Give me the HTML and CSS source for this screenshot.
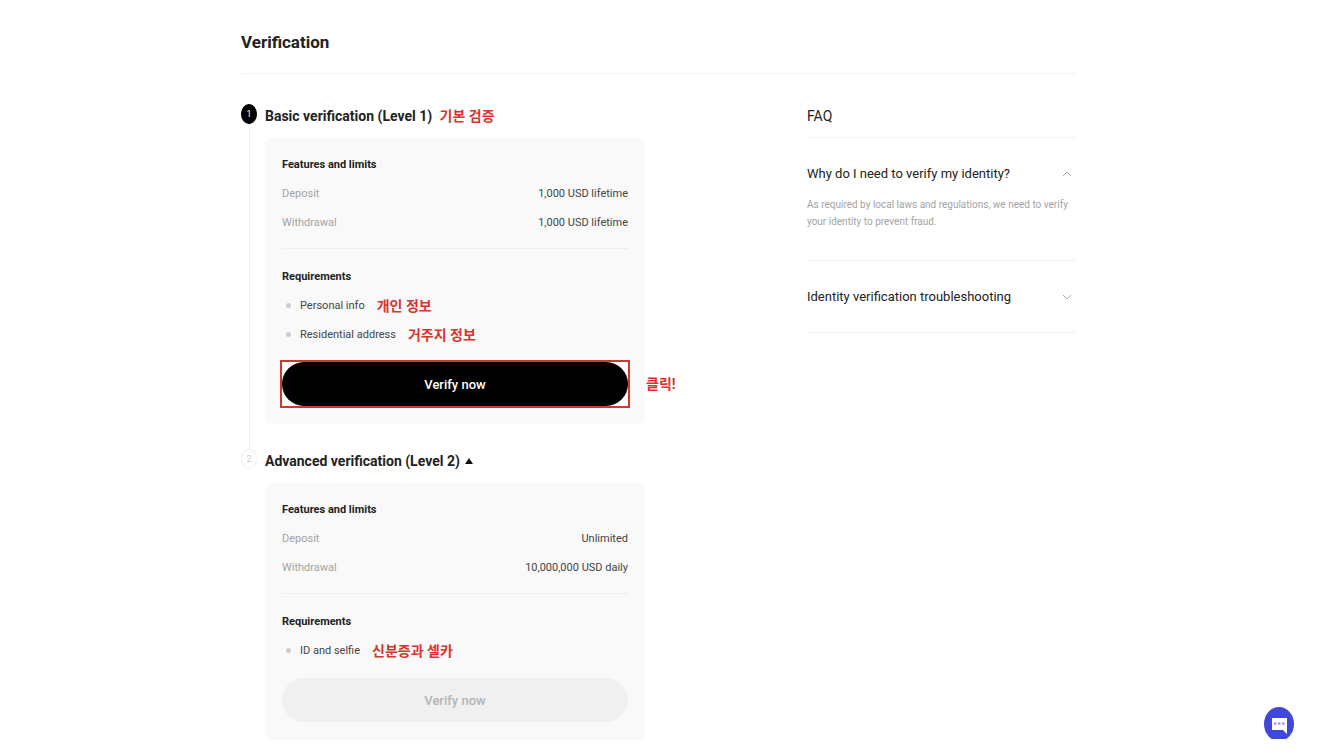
FILE: index.html
```
<!DOCTYPE html>
<html lang="en">
<head>
<meta charset="utf-8">
<meta name="viewport" content="width=device-width, initial-scale=1">
<title>Verification</title>
<link rel="stylesheet" href="styles.css">
</head>
<body>
<main class="page">
  <h1 class="page-title">Verification</h1>
  <div class="columns">
    <ol class="steps">
      <li class="step">
        <div class="rail"><span class="badge badge-active">1</span><span class="rail-line"></span></div>
        <section class="step-body">
          <h2 class="step-title">Basic verification (Level 1) <span class="note" lang="ko">기본 검증</span></h2>
          <div class="card">
            <h3 class="card-title">Features and limits</h3>
            <dl class="limits">
              <div class="limit"><dt>Deposit</dt><dd>1,000 USD lifetime</dd></div>
              <div class="limit"><dt>Withdrawal</dt><dd>1,000 USD lifetime</dd></div>
            </dl>
            <h3 class="card-title">Requirements</h3>
            <ul class="requirements">
              <li>Personal info <span class="note" lang="ko">개인 정보</span></li>
              <li>Residential address <span class="note" lang="ko">거주지 정보</span></li>
            </ul>
            <div class="action action-marked">
              <button class="verify" type="button">Verify now</button>
              <span class="note click-note" lang="ko">클릭!</span>
            </div>
          </div>
        </section>
      </li>
      <li class="step">
        <div class="rail"><span class="badge">2</span></div>
        <section class="step-body">
          <h2 class="step-title">Advanced verification (Level 2)
            <svg class="caret" viewBox="0 0 8 6" aria-hidden="true"><path d="M4 0 8 6H0Z"/></svg>
          </h2>
          <div class="card">
            <h3 class="card-title">Features and limits</h3>
            <dl class="limits">
              <div class="limit"><dt>Deposit</dt><dd>Unlimited</dd></div>
              <div class="limit"><dt>Withdrawal</dt><dd>10,000,000 USD daily</dd></div>
            </dl>
            <h3 class="card-title">Requirements</h3>
            <ul class="requirements">
              <li>ID and selfie <span class="note" lang="ko">신분증과 셀카</span></li>
            </ul>
            <div class="action">
              <button class="verify" type="button" disabled>Verify now</button>
            </div>
          </div>
        </section>
      </li>
    </ol>
    <aside class="faq">
      <h2 class="faq-title">FAQ</h2>
      <div class="faq-item faq-open">
        <button class="question" type="button" aria-expanded="true">Why do I need to verify my identity?
          <svg class="chevron" viewBox="0 0 10 6" aria-hidden="true"><path d="M1 5 5 1l4 4"/></svg>
        </button>
        <p class="answer">As required by local laws and regulations, we need to verify your identity to prevent fraud.</p>
      </div>
      <div class="faq-item">
        <button class="question" type="button" aria-expanded="false">Identity verification troubleshooting
          <svg class="chevron" viewBox="0 0 10 6" aria-hidden="true"><path d="M1 1l4 4 4-4"/></svg>
        </button>
      </div>
    </aside>
  </div>
</main>
<button class="chat" type="button" aria-label="Open chat">
  <svg class="chat-icon" viewBox="0 0 30 32" aria-hidden="true">
    <ellipse cx="15" cy="17" rx="15" ry="17" fill="#4048dc"/>
    <path d="M8 11h15v16l-4-4H8Z" fill="#fff"/>
    <path d="M10 16.500h2.500M14 16.500h2.500M18 16.500h2.500" stroke="#8b90e6" stroke-width="2"/>
  </svg>
</button>
</body>
</html>
```
FILE: styles.css
```
* { box-sizing: border-box; }
body {
  margin: 0;
  background: #fff;
  color: #222;
  font-family: Roboto, "Noto Sans CJK KR", sans-serif;
  font-size: 11px;
}
h1, h2, h3, p, ol, ul, dl, dd { margin: 0; padding: 0; }
ol, ul { list-style: none; }
button { font-family: inherit; border: 0; padding: 0; cursor: pointer; }

.page {
  max-width: 868px;
  margin: 0 auto;
  padding: 26px 18px 16px 15px;
}
.page-title {
  padding-bottom: 15px;
  border-bottom: 1px solid #f3f3f3;
  font-size: 17px;
  line-height: 32px;
  font-weight: 700;
}
.columns {
  display: grid;
  grid-template-columns: minmax(0, 404px) minmax(0, 269px);
  justify-content: space-between;
  padding-top: 30px;
}

.step { display: flex; gap: 8px; }
.rail {
  display: flex;
  flex-direction: column;
  align-items: center;
  width: 16px;
}
.badge {
  width: 16px;
  height: 20px;
  border: 1px solid #f0f0f0;
  border-radius: 50%;
  color: #ccc;
  font-size: 9px;
  line-height: 18px;
  text-align: center;
}
.badge-active { background: #000; border-color: #000; color: #fff; }
.rail-line { flex: 1; width: 1px; background: #f0f0f0; }
.step-body { flex: 1; min-width: 0; }
.step:first-child .step-body { padding-bottom: 25px; }
.step-title {
  padding-bottom: 10px;
  font-size: 14px;
  line-height: 24px;
  font-weight: 700;
}
.caret { width: 8px; height: 6px; margin-left: 2px; vertical-align: 2px; fill: #111; }
.card {
  padding: 12px 17px 18px;
  border-radius: 8px;
  background: #f9f9f9;
}
.card-title { font-size: 11px; line-height: 29px; font-weight: 700; }
.limits {
  margin-bottom: 13px;
  padding-bottom: 11px;
  border-bottom: 1px solid #eee;
}
.limit { display: flex; justify-content: space-between; line-height: 29px; }
.limit dt { color: #a3a3a3; }
.limit dd { color: #444; }
.requirements li {
  display: flex;
  align-items: center;
  height: 29px;
  color: #444;
}
.requirements li::before {
  content: "";
  width: 5px;
  height: 5px;
  margin: 0 9px 0 4px;
  border-radius: 50%;
  background: #ccc;
}
.note {
  color: #d8332f;
  font-size: 14px;
  line-height: 20px;
  font-weight: 700;
}
.step-title .note { margin-left: 4px; }
.requirements .note { margin-left: 12px; }
.action { position: relative; margin-top: 13px; }
.action-marked { outline: 2px solid #cf3733; background: #fff; }
.verify {
  display: block;
  width: 100%;
  height: 44px;
  border-radius: 22px;
  background: #000;
  color: #fff;
  font-size: 13px;
  font-weight: 500;
}
.verify:disabled { background: #f0f0f0; color: #b5b5b5; cursor: default; }
.click-note {
  position: absolute;
  left: 100%;
  top: 12px;
  margin-left: 18px;
  white-space: nowrap;
}

.faq-title {
  padding-bottom: 9px;
  border-bottom: 1px solid #f3f3f3;
  font-size: 14px;
  line-height: 24px;
  font-weight: 400;
}
.faq-item { padding: 25px 0 24px; border-bottom: 1px solid #f3f3f3; }
.faq-open { padding-bottom: 30px; }
.question {
  display: flex;
  align-items: center;
  justify-content: space-between;
  width: 100%;
  padding-right: 4px;
  background: none;
  color: #222;
  font-size: 13px;
  line-height: 22px;
  font-weight: 400;
  text-align: left;
}
.chevron { width: 10px; height: 6px; fill: none; stroke: #aaa; }
.answer { padding-top: 11px; color: #a3a3a3; font-size: 10px; line-height: 17px; }

.chat {
  position: fixed;
  right: 26px;
  bottom: 16px;
  width: 30px;
  height: 32px;
  background: none;
}
.chat-icon { display: block; width: 30px; height: 32px; }
```
